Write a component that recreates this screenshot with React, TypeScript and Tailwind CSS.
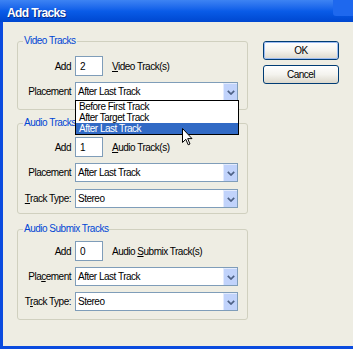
import React from "react";

const txt = "font-['Liberation_Sans',Arial,sans-serif] text-[10px] tracking-[-0.5px] text-black";

function Chevron() {
  return (
    <svg width="8" height="5" viewBox="0 0 8 5">
      <path d="M0.8 0.8 L4 4 L7.2 0.8" stroke="#4D6185" strokeWidth="1.7" fill="none" />
    </svg>
  );
}

function Select({ value, children }: { value: string; children?: React.ReactNode }) {
  return (
    <div className="relative flex h-[19px] w-[163px] items-center border border-[#7F9DB9] bg-white">
      <span className="flex-1 pl-[2px] leading-[17px]">{value}</span>
      <div className="flex h-full w-[14px] items-center justify-center border-l border-t border-[#E3EBFD] bg-[#C1D3FB]">
        <Chevron />
      </div>
      {children}
    </div>
  );
}

function NumInput({ value }: { value: string }) {
  return (
    <div className="flex h-[20px] w-[28px] items-center border border-[#7F9DB9] bg-white pl-[4px]">{value}</div>
  );
}

function Label({ children }: { children: React.ReactNode }) {
  return <div className="w-[53px] shrink-0 text-right">{children}</div>;
}

function Row({ label, children, className = "" }: { label: React.ReactNode; children: React.ReactNode; className?: string }) {
  return (
    <div className={"flex items-center gap-[4px] " + className}>
      <Label>{label}</Label>
      {children}
    </div>
  );
}

function GroupTitle({ children }: { children: React.ReactNode }) {
  return (
    <div className="-mt-[7px] ml-[5px] h-[12px] w-fit bg-[#EEEDE3] px-[1px] leading-[12px] text-[#0046D5]">{children}</div>
  );
}

function Button({ children, focused }: { children: React.ReactNode; focused?: boolean }) {
  return (
    <div className="flex h-[19px] w-[76px] items-center justify-center rounded-[3px] border border-[#003C74] bg-gradient-to-b from-[#FFFFFF] via-[#F4F3EE] to-[#DCD8CC]">
      <div
        className={
          "flex h-full w-full items-center justify-center rounded-[2px] " +
          (focused ? "border border-[#9DBCF2]" : "border border-transparent")
        }
      >
        {children}
      </div>
    </div>
  );
}

export default function App() {
  return (
    <div className={"relative h-[349px] w-[353px] overflow-hidden bg-[#EEEDE3] " + txt}>
      {/* title bar */}
      <div className="relative flex h-[22px] items-start bg-gradient-to-b from-[#3D83F3] via-[#0A5CE8] to-[#0047D0] pl-[7px] pt-[6px]">
        <span className="font-['Liberation_Sans',Arial,sans-serif] text-[12px] font-bold leading-[14px] tracking-[-0.6px] text-white [text-shadow:1px_1px_0_#0A2E8C]">
          Add Tracks
        </span>
        <div className="absolute right-0 top-0 h-[16px] w-[20px] rounded-bl-[3px] bg-[#1E68EE]" />
      </div>
      {/* body */}
      <div className="flex h-[327px] gap-[15px] border-b-[3px] border-l-[3px] border-[#0A4BDF] pl-[14px]">
        {/* groups */}
        <div className="flex w-[231px] flex-col">
          {/* Video */}
          <div className="mt-[19px] flex h-[69px] flex-col rounded-[3px] border border-[#D0D0BF]">
            <GroupTitle>Video Tracks</GroupTitle>
            <Row label="Add" className="mt-[9px]">
              <NumInput value="2" />
              <span className="ml-[5px]">
                <span className="underline">V</span>ideo Track(s)
              </span>
            </Row>
            <Row label="Placement" className="mt-[6px]">
              <Select value="After Last Track">
                <div className="absolute left-[-1px] top-[17px] z-10 flex w-[164px] flex-col border border-black bg-white">
                  <div className="h-[11px] pl-[3px] leading-[11px]">Before First Track</div>
                  <div className="h-[11px] pl-[3px] leading-[11px]">After Target Track</div>
                  <div className="h-[11px] bg-[#316AC5] pl-[3px] leading-[11px] text-white">After Last Track</div>
                </div>
              </Select>
            </Row>
          </div>
          {/* Audio */}
          <div className="mt-[13px] flex h-[91px] flex-col rounded-[3px] border border-[#D0D0BF]">
            <GroupTitle>Audio Tracks</GroupTitle>
            <Row label="Add" className="mt-[8px]">
              <NumInput value="1" />
              <span className="ml-[5px]">
                <span className="underline">A</span>udio Track(s)
              </span>
            </Row>
            <Row label="Placement" className="mt-[6px]">
              <Select value="After Last Track" />
            </Row>
            <Row
              label={
                <>
                  <span className="underline">T</span>rack Type:
                </>
              }
              className="mt-[7px]"
            >
              <Select value="Stereo" />
            </Row>
          </div>
          {/* Submix */}
          <div className="mt-[15px] flex h-[91px] flex-col rounded-[3px] border border-[#D0D0BF]">
            <GroupTitle>Audio Submix Tracks</GroupTitle>
            <Row label="Add" className="mt-[6px]">
              <NumInput value="0" />
              <span className="ml-[5px]">
                Audio <span className="underline">S</span>ubmix Track(s)
              </span>
            </Row>
            <Row
              label={
                <>
                  Pla<span className="underline">c</span>ement
                </>
              }
              className="mt-[6px]"
            >
              <Select value="After Last Track" />
            </Row>
            <Row
              label={
                <>
                  T<span className="underline">r</span>ack Type:
                </>
              }
              className="mt-[6px]"
            >
              <Select value="Stereo" />
            </Row>
          </div>
        </div>
        {/* buttons */}
        <div className="mt-[19px] flex flex-col gap-[5px]">
          <Button focused>OK</Button>
          <Button>Cancel</Button>
        </div>
      </div>
      {/* mouse cursor */}
      <svg className="absolute left-[182px] top-[128px] z-20" width="11" height="18" viewBox="0 0 11 18">
        <path d="M0.5 0.5 L0.5 14.5 L3.8 11.3 L6.2 16.8 L8 16 L5.7 10.6 L10 10.6 Z" fill="white" stroke="black" strokeWidth="1" />
      </svg>
    </div>
  );
}
